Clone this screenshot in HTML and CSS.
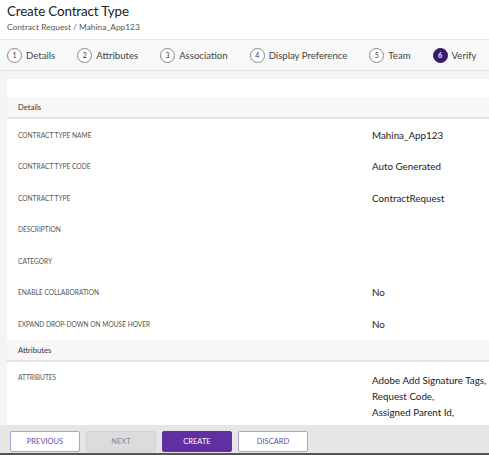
FILE: index.html
```html
<!DOCTYPE html>
<html>
<head>
<title>Create Contract Type</title>
<link rel="stylesheet" href="styles.css">
</head>
<body>
  <div class="page-head">
    <h1 class="title">Create Contract Type</h1>
    <div class="crumb">Contract Request / Mahina_App123</div>
  </div>

  <div class="steps">
    <div class="step"><span class="num">1</span>Details</div>
    <div class="step"><span class="num">2</span>Attributes</div>
    <div class="step"><span class="num">3</span>Association</div>
    <div class="step"><span class="num">4</span>Display Preference</div>
    <div class="step"><span class="num">5</span>Team</div>
    <div class="step active"><span class="num">6</span>Verify</div>
  </div>

  <div class="main">
    <div class="card">
      <div class="section-head">Details</div>
      <div class="row"><div class="label">Contract Type Name</div><div class="value">Mahina_App123</div></div>
      <div class="row"><div class="label">Contract Type Code</div><div class="value">Auto Generated</div></div>
      <div class="row"><div class="label">Contract Type</div><div class="value">ContractRequest</div></div>
      <div class="row"><div class="label">Description</div><div class="value"></div></div>
      <div class="row"><div class="label">Category</div><div class="value"></div></div>
      <div class="row"><div class="label">Enable Collaboration</div><div class="value">No</div></div>
      <div class="row"><div class="label">Expand Drop-Down On Mouse Hover</div><div class="value">No</div></div>

      <div class="section-head">Attributes</div>
      <div class="row multi">
        <div class="label">Attributes</div>
        <div class="value">
          <div>Adobe Add Signature Tags,</div>
          <div>Request Code,</div>
          <div>Assigned Parent Id,</div>
          <div>Agreement Date,</div>
          <div>Status</div>
        </div>
      </div>
    </div>
  </div>

  <div class="actions">
    <button class="btn outline">Previous</button>
    <button class="btn disabled">Next</button>
    <button class="btn primary">Create</button>
    <button class="btn outline">Discard</button>
  </div>
</body>
</html>
```

FILE: styles.css
```css
body {
  margin: 0;
  background: #f4f4f4;
  font-family: Lato, "Liberation Sans", sans-serif;
  color: #333;
  overflow: hidden;
  height: 455px;
}

.page-head {
  background: #fff;
  padding: 3px 7px 0;
  height: 36px;
}

.title {
  margin: 0;
  font-size: 13.4px;
  font-weight: 400;
  color: #222;
  line-height: 16px;
  letter-spacing: -0.15px;
}

.crumb {
  font-size: 8.4px;
  color: #555;
  margin-top: 3px;
}

.steps {
  display: flex;
  align-items: center;
  gap: 22px;
  height: 30px;
  padding: 0 7px;
  background: #f8f8f8;
  border-top: 1px solid #e6e6e6;
  border-bottom: 1px solid #e2e2e2;
  font-size: 9.6px;
  color: #444;
  white-space: nowrap;
}

.step {
  display: flex;
  align-items: center;
  gap: 4px;
}

.num {
  width: 13px;
  height: 13px;
  border: 1px solid #888;
  border-radius: 50%;
  display: flex;
  align-items: center;
  justify-content: center;
  font-size: 7px;
  color: #333;
  background: #fff;
}

.step.active .num {
  background: #3b1868;
  border-color: #3b1868;
  color: #fff;
  font-weight: 700;
}

.main {
  padding: 8px 0 0 7px;
}

.card {
  background: #fff;
  padding-top: 18px;
}

.section-head {
  background: #f7f7f7;
  border-bottom: 2px solid #e4e3ec;
  height: 20px;
  line-height: 21px;
  padding-left: 11px;
  font-size: 7.6px;
  color: #333;
}

.row {
  display: grid;
  grid-template-columns: 354px 1fr;
  align-items: center;
  height: 31.5px;
  padding-left: 11px;
}

.label {
  font-size: 6.6px;
  text-transform: uppercase;
  color: #555;
}

.value {
  font-size: 9.8px;
  color: #222;
  white-space: nowrap;
}

.row.multi {
  align-items: start;
  height: auto;
  padding-top: 11px;
}

.row.multi .value div {
  line-height: 17px;
  margin-top: -1px;
}

.actions {
  position: fixed;
  left: 0;
  right: 0;
  bottom: 0;
  height: 22px;
  padding: 6px 0 0 10px;
  background: #e6e6e6;
  border-bottom: 2px solid #555;
  display: flex;
  gap: 6px;
  align-items: flex-start;
}

.btn {
  width: 70px;
  height: 21px;
  border-radius: 2px;
  font-family: inherit;
  font-size: 7.5px;
  text-transform: uppercase;
  padding: 0;
  cursor: pointer;
}

.btn.outline {
  background: #fff;
  border: 1px solid #b49cd6;
  color: #6b4c9c;
}

.btn.disabled {
  background: #dcdcdc;
  border: 1px solid #d2d2d2;
  color: #888;
}

.btn.primary {
  background: #6030a2;
  border: 1px solid #6030a2;
  color: #fff;
}
```
